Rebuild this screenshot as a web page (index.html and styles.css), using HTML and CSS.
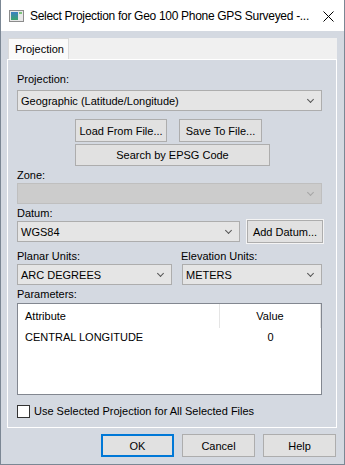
FILE: index.html
```html
<!DOCTYPE html>
<html>
<head>
	<meta charset="UTF-8" />
	<title>Select Projection</title>
	<link rel="stylesheet" href="styles.css">
</head>
<body>
	<div class="window">
		<!--title bar-->
		<div class="titlebar">
			<svg class="appicon" width="15" height="12" viewBox="0 0 15 12">
				<defs>
					<linearGradient id="g" x1="0" y1="0" x2="0" y2="1">
						<stop offset="0" stop-color="#3b7fc4"/>
						<stop offset="1" stop-color="#3aa36b"/>
					</linearGradient>
				</defs>
				<rect x="0.5" y="0.5" width="14" height="11" fill="#e8e8e8" stroke="#8c8c8c"/>
				<rect x="2" y="2" width="7" height="8" fill="url(#g)"/>
				<rect x="10" y="2" width="3" height="2" fill="#7cc47c"/>
			</svg>
			<span class="title">Select Projection for Geo 100 Phone GPS Surveyed -...</span>
			<svg class="close" width="11" height="11" viewBox="0 0 11 11">
				<path d="M0.5 0.5 L10.5 10.5 M10.5 0.5 L0.5 10.5" stroke="#000" stroke-width="1" fill="none"/>
			</svg>
		</div>

		<div class="client">
			<div class="tabs">
				<div class="strip">
					<span class="tab">Projection</span>
					<span class="fill"></span>
				</div>
				<div class="pane">
					<div class="page">
						<div class="lbl">Projection:</div>
						<div class="combo w-full first"><span>Geographic (Latitude/Longitude)</span><i class="arrow"></i></div>

						<div class="filebtns">
							<span class="btn load">Load From File...</span>
							<span class="btn save">Save To File...</span>
						</div>
						<span class="btn epsg">Search by EPSG Code</span>

						<div class="lbl zone">Zone:</div>
						<div class="combo w-full disabled"><span></span><i class="arrow"></i></div>

						<div class="lbl datum">Datum:</div>
						<div class="row datumrow">
							<div class="combo w-datum"><span>WGS84</span><i class="arrow"></i></div>
							<span class="btn adddatum">Add Datum...</span>
						</div>

						<div class="row unitlbls">
							<div class="lbl w-planar">Planar Units:</div>
							<div class="lbl">Elevation Units:</div>
						</div>
						<div class="row unitrow">
							<div class="combo w-planar"><span>ARC DEGREES</span><i class="arrow"></i></div>
							<div class="combo w-elev"><span>METERS</span><i class="arrow"></i></div>
						</div>

						<div class="lbl params">Parameters:</div>
						<div class="list">
							<div class="lhead">
								<span class="c1">Attribute</span>
								<span class="c2">Value</span>
								<span class="c3"></span>
							</div>
							<div class="lrow">
								<span class="c1">CENTRAL LONGITUDE</span>
								<span class="c2">0</span>
							</div>
						</div>

						<div class="check">
							<span class="box"></span>
							<span>Use Selected Projection for All Selected Files</span>
						</div>
					</div>
				</div>
			</div>

			<!--dialog buttons-->
			<div class="actions">
				<span class="btn dlg default">OK</span>
				<span class="btn dlg">Cancel</span>
				<span class="btn dlg">Help</span>
			</div>
		</div>
	</div>
</body>
</html>
```

FILE: styles.css
```css
body {
	margin: 0;
	font-family: "Liberation Sans", Arial, sans-serif;
	font-size: 11px;
	color: #000;
}
.window {
	width: 345px;
	height: 465px;
	box-sizing: border-box;
	border: 1px solid #7b8794;
	border-top: none;
	display: flex;
	flex-direction: column;
	background: #d4d9e1;
	overflow: hidden;
}

/* title bar */
.titlebar {
	height: 31px;
	flex-shrink: 0;
	background: #fff;
	display: flex;
	align-items: center;
}
.appicon {
	flex-shrink: 0;
	margin-left: 8px;
	margin-top: 1px;
}
.title {
	margin-left: 6px;
	font-size: 12px;
	letter-spacing: -0.3px;
	flex: 1;
	white-space: nowrap;
	overflow: hidden;
}
.close {
	flex-shrink: 0;
	margin-right: 10px;
	margin-top: 1px;
}

/* client area */
.client {
	flex: 1;
	display: flex;
	flex-direction: column;
	padding: 7px 7px 0 6px;
}
.tabs {
	width: 330px;
}
.strip {
	height: 21px;
	display: flex;
	padding-left: 1px;
}
.tab {
	width: 61px;
	box-sizing: border-box;
	background: #fafafa;
	border: 1px solid #dadada;
	border-bottom: none;
	padding: 4px 0 0 6px;
}
.fill {
	flex: 1;
	background: #f0f0f0;
}
.pane {
	border: 1px solid #fff;
	padding: 3px;
	background: #d4d9e1;
}
.page {
	height: 361px;
	box-sizing: border-box;
	padding: 10px 0 0 6px;
}

/* controls */
.lbl {
	height: 12px;
	line-height: 12px;
}
.combo {
	height: 21px;
	box-sizing: border-box;
	border: 1px solid #adadad;
	background: #e5e5e5;
	display: flex;
	align-items: center;
	padding: 0 8px 0 3px;
}
.combo span {
	flex: 1;
	white-space: nowrap;
}
.arrow {
	width: 4px;
	height: 4px;
	border-right: 1px solid #555;
	border-bottom: 1px solid #555;
	transform: rotate(45deg);
	margin-top: -3px;
}
.combo.disabled {
	background: #cccccc;
	border-color: #bfbfbf;
}
.combo.disabled .arrow {
	border-color: #a6a6a6;
}
.first {
	margin-top: 5px;
}
.w-full { width: 305px; }
.w-datum { width: 223px; }
.w-planar { width: 155px; }
.w-elev { width: 140px; margin-left: 10px; }

.btn {
	display: flex;
	align-items: center;
	justify-content: center;
	box-sizing: border-box;
	height: 23px;
	border: 1px solid #adadad;
	background: #e1e1e1;
	white-space: nowrap;
}
.filebtns {
	display: flex;
	margin: 8px 0 0 58px;
}
.load { width: 92px; }
.save { width: 83px; margin-left: 12px; }
.epsg {
	width: 195px;
	height: 22px;
	margin: 2px 0 0 58px;
}
.zone { margin-top: 3px; margin-bottom: 2px; }
.datum { margin-top: 3px; }
.row {
	display: flex;
	align-items: center;
}
.datumrow { margin-top: 1px; }
.adddatum {
	width: 76px;
	margin-left: 7px;
	box-shadow: 0 0 0 1px #f4f4f4;
}
.unitlbls { margin-top: 7px; }
.unitlbls .lbl.w-planar { width: 164px; }
.unitrow { margin-top: 2px; }
.params { margin-top: 3px; }

/* parameters list */
.list {
	width: 305px;
	height: 92px;
	box-sizing: border-box;
	margin-top: 3px;
	border: 1px solid #828790;
	background: #fff;
}
.lhead, .lrow {
	display: flex;
	align-items: center;
}
.lhead { height: 24px; }
.lrow { height: 18px; }
.c1 {
	padding-left: 7px;
	box-sizing: border-box;
	align-self: stretch;
	display: flex;
	align-items: center;
}
.c2 {
	text-align: center;
}
.lhead .c1 { border-right: 1px solid #e5e5e5; width: 202px; }
.lhead .c2 { width: 100px; }
.lhead .c3 {
	align-self: stretch;
	border-left: 1px solid #e5e5e5;
}
.lrow .c1 { width: 202px; }
.lrow .c2 { width: 101px; }

.check {
	display: flex;
	align-items: center;
	margin-top: 9px;
	height: 14px;
}
.box {
	width: 13px;
	height: 13px;
	box-sizing: border-box;
	border: 1px solid #333;
	background: #fff;
	margin-right: 4px;
}

/* dialog buttons */
.actions {
	display: flex;
	justify-content: flex-end;
	gap: 8px;
	margin-top: 6px;
	padding-right: 1px;
}
.dlg {
	width: 73px;
}
.default {
	border: 2px solid #0078d7;
}
```
